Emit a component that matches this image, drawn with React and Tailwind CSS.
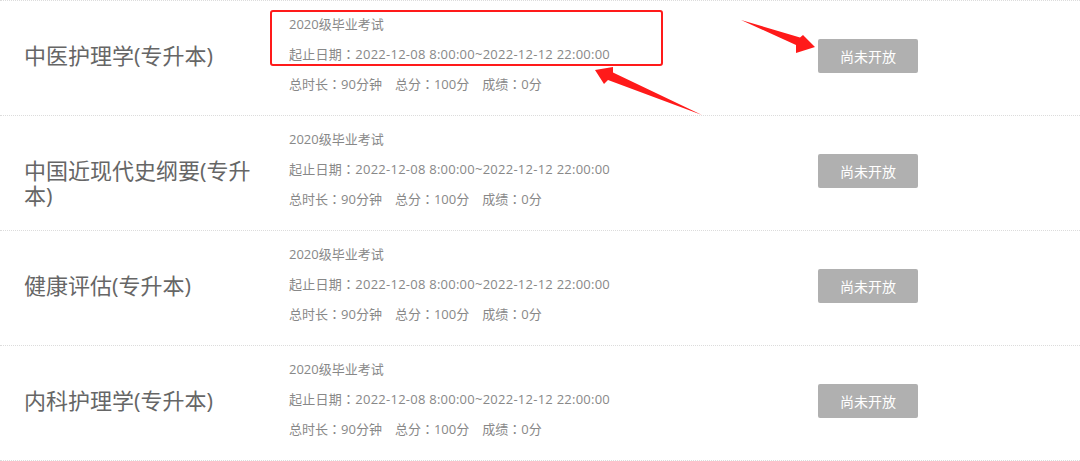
import React from 'react';

const exams = [
  { id: 1, name: '中医护理学(专升本)' },
  { id: 2, name: '中国近现代史纲要(专升本)' },
  { id: 3, name: '健康评估(专升本)' },
  { id: 4, name: '内科护理学(专升本)' },
];

const font = { fontFamily: '"Open Sans", "Noto Sans CJK SC", sans-serif' };

// centred full-width colon, like the original page
const Colon = () => (
  <span style={{ fontFamily: '"Noto Sans CJK TC", sans-serif' }}>：</span>
);

function ExamRow({ exam }) {
  return (
    <div className="flex h-[115px] border-b border-dotted border-[#dcdcdc]">
      <div className="w-[265px] shrink-0 pl-6 pr-2 pt-[42px] text-[22px] leading-[25px] text-[#666]">
        {exam.name}
      </div>
      <div className="w-[529px] shrink-0 pl-6 pt-[9px] text-[13px] leading-[29px] text-[#888]">
        <div>2020级毕业考试</div>
        <div className="tracking-[0.25px]">起止日期<Colon />2022-12-08 8:00:00~2022-12-12 22:00:00</div>
        <div className="flex gap-[13px]">
          <span>总时长<Colon />90分钟</span>
          <span>总分<Colon />100分</span>
          <span>成绩<Colon />0分</span>
        </div>
      </div>
      <div className="pl-6 pt-[38px]">
        <button className="w-[100px] h-[34px] rounded-[2px] bg-[#b0b0b0] text-white text-[14px]">
          尚未开放
        </button>
      </div>
    </div>
  );
}

export default function App() {
  return (
    <div className="relative w-[1080px] h-[461px] bg-white overflow-hidden" style={font}>
      <div className="border-t border-dotted border-[#dcdcdc]">
        {exams.map(exam => <ExamRow key={exam.id} exam={exam} />)}
      </div>

      {/* annotation overlay */}
      <div className="absolute left-[270px] top-[10px] w-[393px] h-[56px] border-2 border-[#ff1a1a] rounded-[3px]" />
      <svg className="absolute left-0 top-0" width="1080" height="461">
        <polygon points="741,20 800,37.5 803,35 815,47 796,53 796,45" fill="#ff1a1a" />
        <polygon points="702,115 613,72.5 613,67 595,70 604,84 608,80" fill="#ff1a1a" />
      </svg>
    </div>
  );
}
